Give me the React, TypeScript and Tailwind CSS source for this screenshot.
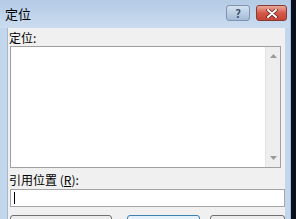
const font = { fontFamily: '"Noto Sans CJK SC", "Liberation Sans", sans-serif' };

function TitleButtons() {
  return (
    <div className="absolute top-[5px] right-[3px] flex gap-[6px]">
      <div className="w-[24px] h-[16px] rounded-[3px] border border-[#7d94b3] bg-gradient-to-b from-[#d6e2f0] to-[#a3bbd8] flex items-center justify-center text-[11px] font-bold text-[#3a4f6a] leading-none">
        ?
      </div>
      <div className="w-[31px] h-[16px] rounded-[3px] border border-[#8a3a34] bg-gradient-to-b from-[#e9a99c] via-[#d4584a] to-[#c54433] flex items-center justify-center">
        <svg width="12" height="9" viewBox="0 0 12 9">
          <path d="M2 1 L10 8 M10 1 L2 8" stroke="#5a1a14" strokeWidth="3.4" strokeLinecap="round" />
          <path d="M2 1 L10 8 M10 1 L2 8" stroke="#ffffff" strokeWidth="2" strokeLinecap="round" />
        </svg>
      </div>
    </div>
  );
}

export default function App() {
  return (
    <div className="w-[296px] h-[219px] overflow-hidden flex bg-[#0a0f1a]" style={font}>
      <div className="w-[291px] h-full flex flex-col bg-[#c2d6ec] border-r border-[#9fc0e6] rounded-tl-[6px]">
        <div className="relative h-[28px] shrink-0 bg-gradient-to-b from-[#b4cbe5] to-[#cbdcef] pl-[5px] pt-[6px] text-[13px] leading-[16px] text-black">
          定位
          <TitleButtons />
        </div>
        <div className="flex-1 ml-[7px] mr-[5px] bg-[#f0f0f0] border-l border-[#a6b9d0] flex flex-col pl-[1px]">
          <div className="text-[12px] leading-[14px] pt-[3px] h-[18px] text-black">定位:</div>
          <div className="ml-[1px] mr-[4px] h-[122px] border border-[#a0a0a0] bg-white flex justify-end">
            <div className="w-[15px] h-full bg-[#eeeeee] border-l border-[#e4e4e4] flex flex-col items-center justify-between py-[7px]">
              <svg width="7" height="4" viewBox="0 0 7 4"><path d="M0 4 L3.5 0 L7 4 Z" fill="#9a9a9a" /></svg>
              <svg width="7" height="4" viewBox="0 0 7 4"><path d="M0 0 L3.5 4 L7 0 Z" fill="#9a9a9a" /></svg>
            </div>
          </div>
          <div className="text-[12px] leading-[14px] pt-[5px] h-[21px] text-black">引用位置 (<span className="underline">R</span>):</div>
          <div className="ml-[1px] h-[18px] border border-[#a5a5a5] bg-white flex items-center pl-[3px]">
            <div className="w-[1px] h-[12px] bg-black" />
          </div>
          <div className="flex mt-[8px] ml-[1px]">
            <div className="w-[102px] h-[10px] border border-[#707070] rounded-t-[3px] bg-[#ececec]" />
            <div className="w-[74px] h-[10px] ml-[15px] border border-[#3c7fb1] rounded-t-[3px] bg-[#e4f1fb]" />
            <div className="w-[75px] h-[10px] ml-[10px] border border-[#707070] rounded-t-[3px] bg-[#ececec]" />
          </div>
        </div>
      </div>
    </div>
  );
}
